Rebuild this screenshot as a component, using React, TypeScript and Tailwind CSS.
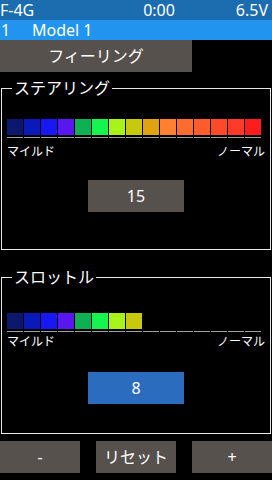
import React from "react";

const colors = [
  "#0c1870",
  "#0a1ab8",
  "#1818f4",
  "#5a16f0",
  "#0eb054",
  "#16f44e",
  "#a8f41a",
  "#c8c80e",
  "#e0a210",
  "#ff8030",
  "#ff6c30",
  "#ff5c30",
  "#ff4a2a",
  "#ff3a28",
  "#ff1c1c",
];

const font = { fontFamily: '"Noto Sans", "Noto Sans CJK JP", sans-serif' };

function Bars({ filled }: { filled: number }) {
  return (
    <div className="flex gap-px px-[5px]">
      {colors.map((c, i) => (
        <div key={i} className="flex w-4 flex-col">
          <div
            className="h-4"
            style={{ backgroundColor: i < filled ? c : "transparent" }}
          />
          <div className="mt-[2px] h-px bg-[#a0a0a0]" />
        </div>
      ))}
    </div>
  );
}

function Section({
  title,
  filled,
  value,
  active,
  className,
  barsTop,
  labelsTop,
  boxTop,
  bottom,
}: {
  title: string;
  filled: number;
  value: string;
  active?: boolean;
  className?: string;
  barsTop: string;
  labelsTop: string;
  boxTop: string;
  bottom: string;
}) {
  return (
    <fieldset className={`mx-px border border-[#e8e8e8] ${bottom} ${className ?? ""}`}>
      <legend className="ml-[10px] px-[2px] text-[16px] leading-4 text-white">{title}</legend>
      <div className={barsTop}>
        <Bars filled={filled} />
      </div>
      <div className={`flex justify-between px-[5px] text-[12px] leading-4 text-white ${labelsTop}`}>
        <span>マイルド</span>
        <span>ノーマル</span>
      </div>
      <div className={`flex justify-center ${boxTop}`}>
        <div
          className={`flex h-8 w-24 items-center justify-center text-[16px] text-white ${
            active ? "bg-[#2c6cbf]" : "bg-[#57514e]"
          }`}
        >
          {value}
        </div>
      </div>
    </fieldset>
  );
}

export default function App() {
  return (
    <div className="h-[480px] w-[272px] overflow-hidden bg-black" style={font}>
      <div className="flex h-5 items-center justify-between bg-[#1c6cb0] pr-[4px] text-[16px] leading-5 text-white">
        <span>F-4G</span>
        <span className="ml-[48px]">0:00</span>
        <span>6.5V</span>
      </div>
      <div className="flex h-5 items-center bg-[#2194f0] text-[16px] leading-5 text-white">
        <span className="w-8 pl-[1px]">1</span>
        <span>Model 1</span>
      </div>
      <div className="flex h-8 w-48 items-center justify-center bg-[#57514e] text-[16px] text-white">
        フィーリング
      </div>
      <Section
        title="ステアリング"
        filled={15}
        value="15"
        className="mt-2"
        barsTop="mt-[23px]"
        labelsTop="mt-[6px]"
        boxTop="mt-[20px]"
        bottom="pb-[37px]"
      />
      <Section
        title="スロットル"
        filled={8}
        value="8"
        active
        className="mt-[19px]"
        barsTop="mt-[28px]"
        labelsTop="mt-[2px]"
        boxTop="mt-[22px]"
        bottom="pb-[29px]"
      />
      <div className="mt-[7px] flex h-8 justify-between text-[16px] text-white">
        <div className="flex w-20 items-center justify-center bg-[#57514e]">-</div>
        <div className="flex w-20 items-center justify-center bg-[#57514e]">リセット</div>
        <div className="flex w-20 items-center justify-center bg-[#57514e]">+</div>
      </div>
    </div>
  );
}
